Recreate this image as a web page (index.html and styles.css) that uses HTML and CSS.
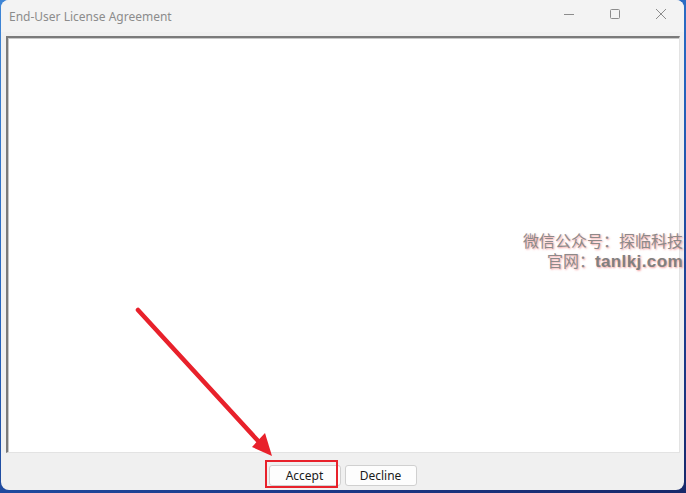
FILE: index.html
```html
<!doctype html>
<html lang="en">
<head>
	<meta charset="UTF-8">
	<title>End-User License Agreement</title>
	<link rel="stylesheet" href="styles.css">
</head>
<body>
	<div class="window">
		<div class="titlebar">
			<span class="title">End-User License Agreement</span>
			<div class="controls">
				<span class="ctl">
					<svg width="12" height="12" viewBox="0 0 12 12"><path d="M1 6.5H11" stroke="#8c8c8c" stroke-width="1"/></svg>
				</span>
				<span class="ctl">
					<svg width="12" height="12" viewBox="0 0 12 12"><rect x="1.5" y="1.5" width="9" height="9" rx="1" fill="none" stroke="#8c8c8c" stroke-width="1"/></svg>
				</span>
				<span class="ctl">
					<svg width="12" height="12" viewBox="0 0 12 12"><path d="M1 1L11 11M11 1L1 11" stroke="#8c8c8c" stroke-width="1"/></svg>
				</span>
			</div>
		</div>
		<div class="client">
			<div class="textbox"></div>
		</div>
		<div class="buttons">
			<button class="btn">Accept</button>
			<button class="btn">Decline</button>
		</div>
	</div>

	<!-- 标注层 -->
	<div class="watermark">
		<p>微信公众号：探临科技</p>
		<p>官网：<b>tanlkj.com</b></p>
	</div>
	<div class="mark"></div>
	<svg class="arrow" width="686" height="493" viewBox="0 0 686 493">
		<path d="M138 310L260 443" stroke="#e8212b" stroke-width="4.5" stroke-linecap="round"/>
		<path d="M272 456L252 447L265 433Z" fill="#e8212b"/>
	</svg>
</body>
</html>
```
FILE: styles.css
```css
*,*::before,*::after{box-sizing:border-box;}
html,body,p{margin:0;padding:0;}
body{
	width:686px;
	height:493px;
	overflow:hidden;
	background:linear-gradient(160deg,#3f86d6 0%,#2463bd 45%,#1c3a8a 80%,#17286a 100%);
	font-family:"Noto Sans","Open Sans",sans-serif;
	position:relative;
}
.window{
	margin:0 2px 0 1px;
	height:490px;
	background:#f0f0f0;
	border-radius:8px;
	overflow:hidden;
	display:flex;
	flex-direction:column;
}
.titlebar{
	height:32px;
	background:#f3f3f3;
	display:flex;
	align-items:center;
	justify-content:space-between;
	padding-left:8px;
}
.title{
	font-size:12px;
	color:#8c8c8c;
}
.controls{
	display:flex;
	height:100%;
}
.ctl{
	width:46px;
	height:100%;
	display:flex;
	align-items:center;
	justify-content:center;
	margin-top:-2px;
}
.client{
	flex:1;
	padding:4px 4px 0 5px;
	display:flex;
}
.textbox{
	flex:1;
	background:#fff;
	border-top:2px solid #7a7a7a;
	border-left:2px solid #7a7a7a;
	border-right:1px solid #e3e3e3;
	border-bottom:1px solid #e3e3e3;
	box-shadow:inset 1px 1px 0 #c8c8c8;
}
.buttons{
	height:37px;
	display:flex;
	justify-content:center;
	align-items:flex-start;
	gap:4px;
	padding-top:12px;
}
.btn{
	width:72px;
	height:21px;
	background:#fdfdfd;
	border:1px solid #d0d0d0;
	border-radius:3px;
	font-family:"Noto Sans","Open Sans",sans-serif;
	font-size:12px;
	color:#1a1a1a;
	padding:0;
	line-height:18px;
}
.watermark{
	position:absolute;
	right:3px;
	top:230px;
	text-align:right;
	font-family:"Noto Sans CJK SC",sans-serif;
	font-size:16px;
	color:#8d8a8a;
	text-shadow:1px 1px 2px rgba(235,90,90,.6);
}
.watermark p{
	height:20px;
	line-height:20px;
	overflow:visible;
}
.watermark b{
	font-family:"Liberation Sans",sans-serif;
	font-size:17px;
	font-weight:bold;
	letter-spacing:.4px;
	color:#808080;
}
.mark{
	position:absolute;
	left:265px;
	top:460px;
	width:73px;
	height:28px;
	border:2px solid #e8212b;
}
.arrow{
	position:absolute;
	left:0;
	top:0;
}
```
